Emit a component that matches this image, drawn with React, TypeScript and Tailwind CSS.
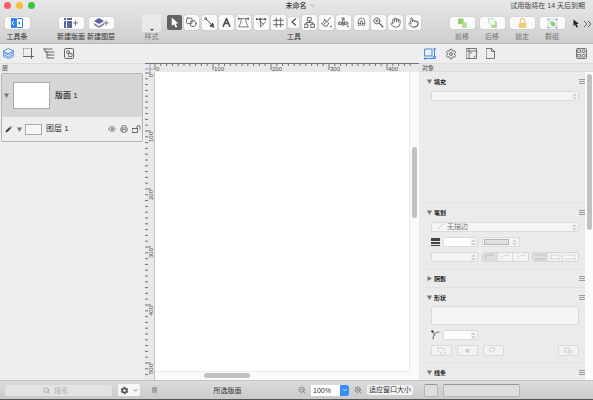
import type { ReactNode } from "react";
import { ChevronDown, Search, ZoomIn, ZoomOut, Settings, Magnet, Hand, Pointer, Printer, Eye, ChevronsUpDown } from "lucide-react";
import { IoMdSettings } from "react-icons/io";

const stroke = {
  fill: "none",
  stroke: "currentColor",
  strokeLinecap: "round" as const,
  strokeLinejoin: "round" as const,
};

const tools: { label: string; icon: ReactNode }[] = [
  {
    label: "选择",
    icon: <path d="M5 1v15l4-3 3 6 3-1-3-6h5z" fill="white" />,
  },
  {
    label: "形状",
    icon: (
      <g {...stroke} strokeWidth="1.5">
        <rect x="1" y="2" width="10" height="10" rx="2" />
        <circle cx="13" cy="12" r="5.5" />
      </g>
    ),
  },
  {
    label: "线条",
    icon: (
      <g {...stroke} strokeWidth="1.7">
        <circle cx="3" cy="3" r="1.7" />
        <path d="M4 4l10 10" />
        <path d="M11 16l5-5 2 7z" fill="currentColor" />
      </g>
    ),
  },
  {
    label: "文本",
    icon: <path d="M10 3L4 17M10 3l6 14M6.500 12h7" {...stroke} strokeWidth="2.8" />,
  },
  {
    label: "钢笔",
    icon: (
      <g {...stroke} strokeWidth="1.3">
        <path d="M1 3h18M6 3C6 9 4 14 1 18h18c-3-4-5-9-5-15" />
        <path d="M0 2h2v2H0zM18 2h2v2h-2z" fill="currentColor" />
      </g>
    ),
  },
  {
    label: "图表",
    icon: (
      <g {...stroke} strokeWidth="1.5">
        <path d="M1 4h16M8 4v14l9-9" />
        <path d="M0 3h2v2H0zM16 3h2v2h-2zM7 3h2v2H7z" fill="currentColor" />
        <path d="M8 8l5 5" />
      </g>
    ),
  },
  {
    label: "画板",
    icon: <path d="M6 2v16M14 2v16M1 6h18M1 14h18" {...stroke} strokeWidth="1.5" />,
  },
  {
    label: "收起",
    icon: <path d="M14 2L5 10l9 8" {...stroke} strokeWidth="3" />,
  },
  {
    label: "组织图",
    icon: (
      <g {...stroke} strokeWidth="1.5">
        <path d="M7 1h6v6H7zM1 13h6v6H1zM13 13h6v6h-6zM10 7v3M4 13v-3h12v3" />
      </g>
    ),
  },
  {
    label: "样式刷",
    icon: (
      <g {...stroke} strokeWidth="1.5">
        <path d="M17 1l-5 6M7 5l7 6-3 6c-4 0-8-2-10-6 3 0 4-3 6-6zM9 8l-3 5" />
        <path d="M18 17h1v1h-1z" fill="currentColor" />
      </g>
    ),
  },
  {
    label: "印章",
    icon: (
      <g {...stroke} strokeWidth="1.3">
        <circle cx="9" cy="3" r="2" />
        <path d="M8 5v10h3V5M1 10q3-3 6 0v4H1zM12 10q3-3 6 0v4h-6zM1 11h17" />
        <path d="M18 17h1v1h-1z" fill="currentColor" />
      </g>
    ),
  },
  { label: "磁铁", icon: <Magnet size={18} x={1} y={1} strokeWidth={1.6} transform="rotate(-45 10 10)" /> },
  {
    label: "缩放",
    icon: (
      <g {...stroke} strokeWidth="1.5">
        <circle cx="7" cy="7" r="5.500" />
        <path d="M5 7h4M7 5v4" />
        <path d="M12 12l6 6" strokeWidth="2.4" />
      </g>
    ),
  },
  { label: "平移", icon: <Hand size={20} strokeWidth={1.7} /> },
  { label: "浏览", icon: <Pointer size={20} strokeWidth={1.7} /> },
];

const arrange = [
  {
    label: "前移",
    icon: (
      <>
        <path d="M2 1h10v10H2z" fill="#8fce6d" />
        <path d="M9 8h9v10H9z" fill="#b5dfa0" />
      </>
    ),
  },
  {
    label: "后移",
    icon: (
      <>
        <path d="M8 7h10v11H8z" fill="#a8d98f" />
        <path d="M3 1h8l4 4v8H8l-5-4z" fill="#eef7e9" stroke="#9bd27d" />
      </>
    ),
  },
  {
    label: "锁定",
    icon: (
      <>
        <path d="M6 9V5a4 4 0 018 0v4" fill="none" stroke="#e9c477" strokeWidth="2" />
        <path d="M3 9h14v9H3z" fill="#f0cb7c" />
      </>
    ),
  },
  {
    label: "群组",
    icon: (
      <>
        <path d="M2 2h16v16H2z" fill="none" stroke="#a9bdd8" />
        <path d="M1 1h3v3H1zM16 1h3v3h-3zM1 16h3v3H1zM16 16h3v3h-3z" fill="#8aa5cc" />
        <path d="M5 5h7v7H5z" fill="#b7dda5" />
        <path d="M8 8h7v7H8z" fill="#8fce6d" />
      </>
    ),
  },
];

function LabelledButton({ label, children, dim }: { label: string; children: ReactNode; dim?: boolean }) {
  return (
    <label className={`flex w-[30px] flex-col items-center gap-[3px] whitespace-nowrap ${dim ? "text-[#777]" : "text-[#333]"}`}>
      <button className="flex h-[12px] w-[25px] items-center justify-center rounded-[2px] bg-[#fbfbfb] shadow-[0_0_1px_#999]">
        {children}
      </button>
      {label}
    </label>
  );
}

function Ruler({ vertical }: { vertical?: boolean }) {
  const marks = Array.from({ length: vertical ? 54 : 45 }, (_, i) => i);
  return (
    <svg width="100%" height="100%" className="block text-[#555]" aria-hidden="true">
      {marks.map((i) => {
        const at = 1 + i * 5.8;
        const long = i % 10 === 0;
        return vertical ? (
          <g key={i}>
            <path d={long ? `M0 ${at}h6` : `M0 ${at}h3`} stroke="currentColor" strokeWidth="0.8" />
            {long && (
              <text fontSize="6" fill="currentColor" textAnchor="end" transform={`translate(8 ${at + 1}) rotate(-90)`}>
                {i * 10}
              </text>
            )}
          </g>
        ) : (
          <g key={i}>
            <path d={long ? `M${at} 0v6` : `M${at} 0v2`} stroke="currentColor" strokeWidth="0.8" />
            {long && (
              <text fontSize="6" fill="currentColor" x={at + 1} y="7">
                {i * 10}
              </text>
            )}
          </g>
        );
      })}
    </svg>
  );
}

function Triangle({ closed }: { closed?: boolean }) {
  return (
    <svg width="5" height="5" viewBox="0 0 10 10" className="shrink-0 text-[#777]">
      <path d={closed ? "M1 0l9 5-9 5z" : "M0 1h10L5 10z"} fill="currentColor" />
    </svg>
  );
}

function SectionTitle({ title, closed }: { title: string; closed?: boolean }) {
  return (
    <div className="flex h-[9px] items-center justify-between pl-2">
      <h2 className="flex items-center gap-[2px] text-[6px] font-bold text-[#222]">
        <Triangle closed={closed} />
        {title}
      </h2>
      <button aria-label={`${title}菜单`}>
        <svg width="6" height="5" viewBox="0 0 6 5" className="block">
          <path d="M0 .5h6M0 2.500h6M0 4.500h6" stroke="#999" />
        </svg>
      </button>
    </div>
  );
}

function Stepper({ label, white }: { label: string; white?: boolean }) {
  return (
    <div className="flex h-[10px] w-full items-center rounded-[2px] border border-[#dadada] bg-[#f5f5f5]">
      <input aria-label={label} className={`h-full min-w-0 flex-1 ${white ? "bg-white" : "bg-transparent"}`} />
      <ChevronsUpDown size={7} className="shrink-0 text-[#777]" />
    </div>
  );
}

function Segments({ icons }: { icons: string[] }) {
  return (
    <div className="flex h-[10px] divide-x divide-[#dcdcdc] overflow-hidden rounded-[2px] border border-[#d6d6d6] bg-[#f3f3f3]">
      {icons.map((d, i) => (
        <button key={i} aria-label={`选项 ${i + 1}`} className={`flex w-[15px] items-center justify-center ${i === 0 ? "bg-[#dedede]" : ""}`}>
          <svg width="11" height="6" viewBox="0 0 11 6">
            <path d={d} {...stroke} stroke={i === 0 ? "#b8b8b8" : "#cfcfcf"} strokeWidth="0.8" />
          </svg>
        </button>
      ))}
    </div>
  );
}

function Header() {
  return (
    <header className="border-b border-[#b5b5b5] bg-gradient-to-b from-[#e8e8e8] to-[#cecece]">
      <div className="grid h-[11px] grid-cols-3 items-center px-1">
        <div className="flex gap-[5px]">
          <button aria-label="关闭" className="size-[7px] rounded-full bg-[#f65f58]" />
          <button aria-label="最小化" className="size-[7px] rounded-full bg-[#f9bd35]" />
          <button aria-label="全屏" className="size-[7px] rounded-full bg-[#35c943]" />
        </div>
        <h1 className="flex items-center justify-center gap-[2px] pl-2 text-[7px] font-medium text-[#333]">
          未命名
          <ChevronDown size={7} className="text-[#888]" />
        </h1>
        <p className="pr-1 text-right text-[7px] text-[#444]">试用版将在 14 天后到期</p>
      </div>

      <div className="flex h-8 items-start pt-[6px] pr-[2px] pl-[2px] text-[7px] leading-[10px]">
        <LabelledButton label="工具条">
          <svg width="12" height="10" viewBox="0 0 12 10">
            <path d="M0 0h5v10H0z" fill="#3285ea" />
            <path d="M3 3L1 5l2 2" fill="none" stroke="white" />
            <path d="M5.5.5h6v9h-6z" fill="none" stroke="#3285ea" />
            <path d="M7 5l2-2v4z" fill="#3285ea" />
          </svg>
        </LabelledButton>
        <div className="ml-6 flex">
          <LabelledButton label="新建版面">
            <svg width="15" height="10" viewBox="0 0 15 10">
              <path d="M0 0h2v2H0zM3 0h5v2H3zM0 3h2v7H0zM3 3h5v7H3z" fill="#59669d" />
              <path d="M9 5h5M11.500 2.500v5" stroke="#777" />
            </svg>
          </LabelledButton>
          <LabelledButton label="新建图层">
            <svg width="15" height="10" viewBox="0 0 15 10">
              <path d="M0 3l5-3 5 3-5 3z" fill="#59669d" />
              <path d="M0 5l5 3 5-3v2L5 10 0 7z" fill="#7984b0" />
              <path d="M9.500 5h5M12 2.500v5" stroke="#777" />
            </svg>
          </LabelledButton>
        </div>
        <label className="-mt-[3px] ml-[26px] flex flex-col items-center text-[#777]">
          <button className="flex h-[18px] w-[19px] items-end justify-center rounded-[2px] bg-[#e9e9e9] pb-[1px]">
            <svg width="4" height="2" viewBox="0 0 4 2">
              <path d="M0 0h4L2 2z" fill="#444" />
            </svg>
          </button>
          样式
        </label>
        <div className="ml-[6px] w-[254px] text-center text-[#333]">
          <div className="-mt-[3px] mb-[2px] flex h-4 items-center justify-between">
            {tools.map((tool, i) => (
              <button
                key={tool.label}
                aria-label={tool.label}
                className={`flex items-center justify-center rounded-[2px] ${i === 7 ? "h-[11px] w-[11px]" : "h-[15px] w-[15px]"} ${i === 0 ? "bg-[#626262]" : "bg-[#fafafa] text-[#505050] shadow-[0_0_1px_#999]"}`}
              >
                <svg width={i === 7 ? 8 : 11} height={i === 7 ? 8 : 11} viewBox="0 0 20 20" className="shrink-0">
                  {tool.icon}
                </svg>
              </button>
            ))}
          </div>
          工具
        </div>
        <div className="ml-auto flex">
          {arrange.map((item) => (
            <LabelledButton key={item.label} label={item.label} dim>
              <svg width="11" height="11" viewBox="0 0 20 20">
                {item.icon}
              </svg>
            </LabelledButton>
          ))}
        </div>
        <div className="ml-[6px] flex h-[13px] items-center gap-1">
          <svg width="6" height="9" viewBox="0 0 12 18">
            <path d="M1 1v13l3-3 3 6 3-1-3-6h5z" fill="#222" />
          </svg>
          <button aria-label="更多">
            <svg width="8" height="6" viewBox="0 0 8 6">
              <path d="M1 0l3 3-3 3M5 0l3 3-3 3" fill="none" stroke="#555" strokeWidth="0.9" />
            </svg>
          </button>
        </div>
      </div>
    </header>
  );
}

function Sidebar() {
  return (
    <aside className="flex w-[145px] shrink-0 flex-col bg-[#eeeeee]">
      <nav className="flex h-[19px] items-center gap-[9px] pl-[3px] text-[#666]">
        <button aria-label="层" className="text-[#3f8ae8]">
          <svg width="11" height="11" viewBox="0 0 22 22">
            <path d="M1 6l10-5 10 5-10 5zM1 6v3l10 5 10-5V6M1 11v2l10 5 10-5v-2M1 15v2l10 4 10-4v-2" {...stroke} strokeWidth="1.7" />
          </svg>
        </button>
        <button aria-label="参考线">
          <svg width="11" height="11" viewBox="0 0 11 11">
            <path d="M.5.5v8M.5.5h8" {...stroke} strokeWidth="0.6" strokeDasharray="0.5 1.500" />
            <path d="M8.500 0v11M0 8.500h11" {...stroke} strokeWidth="1" />
          </svg>
        </button>
        <button aria-label="大纲">
          <svg width="12" height="11" viewBox="0 0 12 11">
            <path d="M0 1h9M4 4h7M6 7h5M6 10h5M2 1v3h2M4 4v6h2M4 7h2" {...stroke} strokeWidth="1" />
          </svg>
        </button>
        <button aria-label="选择">
          <svg width="11" height="11" viewBox="0 0 11 11">
            <rect x=".5" y=".5" width="9" height="10" rx="1" {...stroke} />
            <circle cx="4" cy="4" r="1.500" {...stroke} strokeWidth="0.9" />
            <path d="M5 5.500h3v3H5z" {...stroke} strokeWidth="0.9" />
          </svg>
        </button>
      </nav>
      <div className="flex h-[9px] items-center border-t border-[#dcdcdc] bg-[#e9e9e9] pl-[2px] text-[6px] text-[#444]">层</div>
      <div className="mt-[1px] mr-[2px] ml-[1px] rounded-[2px] border border-[#b5b5b5] text-[8px] text-[#333]">
        <div className="flex h-[43px] items-center gap-1 bg-[#d6d6d6] pl-[2px]">
          <Triangle />
          <div className="h-[27px] w-[37px] border border-[#aaa] bg-white" />
          <span className="pl-[1px] font-medium">版面 1</span>
        </div>
        <div className="flex h-[24px] items-center gap-[3px] pr-[1px] pl-[3px]">
          <svg width="7" height="7" viewBox="0 0 14 14" className="mr-[2px]">
            <path d="M1 13l1-4 7-7 3 3-7 7z" fill="#444" />
            <path d="M10 1l1-1 3 3-1 1z" fill="#444" />
          </svg>
          <Triangle />
          <div className="h-[11px] w-[17px] border border-[#aaa] bg-[#f7f7f7]" />
          <span className="flex-1 pl-[1px]">图层 1</span>
          <div className="flex items-center gap-1 text-[#555]">
            <button aria-label="可见"><Eye size={8} /></button>
            <button aria-label="打印"><Printer size={8} /></button>
            <button aria-label="锁定">
              <svg width="9" height="8" viewBox="0 0 9 8">
                <path d="M.5 3.500h5v4h-5zM5 3.500V2a1.500 1.500 0 013 0v2" {...stroke} strokeWidth="0.9" />
              </svg>
            </button>
          </div>
        </div>
      </div>
    </aside>
  );
}

function Canvas() {
  return (
    <main className="flex min-w-0 flex-1 flex-col">
      <div className="h-[19px] bg-[#eeeeee]" />
      <div className="flex h-[9px] border-t border-[#777] bg-[#e9e9e9]">
        <div className="w-[9px] shrink-0">
          <svg width="9" height="8" viewBox="0 0 9 8">
            <path d="M0 5h9M5 0v8" stroke="#8e8ecb" strokeWidth="0.8" />
          </svg>
        </div>
        <div className="min-w-0 flex-1 overflow-hidden"><Ruler /></div>
      </div>
      <div className="flex min-h-0 flex-1">
        <div className="w-[10px] shrink-0 border-r border-[#c4c4c4] bg-[#e9e9e9]"><Ruler vertical /></div>
        <div className="flex min-w-0 flex-1 flex-col bg-[#fafafa]">
          <div className="flex min-h-0 flex-1">
            <div className="flex-1 border-r border-b border-[#ececec] bg-white" />
            <div className="w-[9px] px-[2px] pt-[75px]">
              <div className="h-[71px] rounded-full bg-[#c1c1c1]" />
            </div>
          </div>
          <div className="h-2 pt-[1px] pl-[49px]">
            <div className="h-[5px] w-[46px] rounded-full bg-[#c1c1c1]" />
          </div>
        </div>
      </div>
    </main>
  );
}

function Inspector() {
  return (
    <aside className="flex w-[174px] shrink-0 flex-col bg-[#ebebeb]">
      <nav className="flex h-[19px] items-center gap-[9px] bg-[#eeeeee] pr-[6px] pl-[5px] text-[#666]">
        <button aria-label="对象" className="text-[#3f8ae8]">
          <svg width="12" height="12" viewBox="0 0 12 12">
            <path d="M1 1h7v7H1zM10.500 0v9M9.500 1h2M0 10.500h10M1 9.500v2M9.500 8.500h2v2h-2z" {...stroke} />
          </svg>
        </button>
        <button aria-label="属性"><Settings size={12} /></button>
        <button aria-label="画布">
          <svg width="11" height="11" viewBox="0 0 11 11">
            <path d="M.5.500h10v10H.500zM.500 3h10M3 .500v10" {...stroke} strokeWidth="0.9" />
            <path d="M4.500 5.500v-1h1M8 9h1V8" {...stroke} strokeWidth="0.7" />
          </svg>
        </button>
        <button aria-label="文稿">
          <svg width="9" height="11" viewBox="0 0 9 11">
            <path d="M.5.500h5l3 3v7h-8zM5.500.500v3h3" {...stroke} strokeWidth="0.9" />
          </svg>
        </button>
        <button aria-label="模具" className="ml-auto">
          <svg width="11" height="11" viewBox="0 0 11 11">
            <rect x=".5" y=".5" width="10" height="10" rx="1" {...stroke} strokeWidth="0.9" />
            <path d="M2 2h2.500v2.500H2zM6.500 2H9v2.500H6.500zM2 6.500h2.500V9H2zM6.500 6.500H9V9H6.500z" {...stroke} strokeWidth="0.8" />
          </svg>
        </button>
      </nav>
      <div className="flex h-[9px] items-center border-y border-[#dcdcdc] bg-[#e6e6e6] pl-[3px] text-[6px] text-[#444]">对象</div>
      <div className="flex min-h-0 flex-1">
        <div className="flex min-w-0 flex-1 flex-col overflow-hidden">
          <section className="h-[131px] shrink-0 border-b border-[#e3e3e3] pt-[5px]">
            <SectionTitle title="填充" />
            <div className="mt-[5px] mr-[6px] ml-3 flex h-[10px] items-center rounded-[2px] border border-[#dadada] bg-[#f5f5f5]">
              <select aria-label="填充类型" className="min-w-0 flex-1 appearance-none" />
              <ChevronsUpDown size={7} className="text-[#777]" />
            </div>
          </section>
          <section className="h-[67px] shrink-0 border-b border-[#e3e3e3] pt-[5px]">
            <SectionTitle title="笔划" />
            <div className="mt-[5px] mr-[6px] ml-3 flex flex-col gap-[5px]">
              <div className="flex h-[10px] items-center rounded-[2px] border border-[#dadada] bg-[#f5f5f5] pl-1">
                <svg width="8" height="8" viewBox="0 0 8 8">
                  <path d="M1 7l6-6" stroke="#ccc" />
                </svg>
                <select aria-label="描边类型" className="min-w-0 flex-1 appearance-none pl-[3px] text-[7px] leading-[8px] text-[#777]">
                  <option>无描边</option>
                </select>
                <ChevronsUpDown size={7} className="text-[#777]" />
              </div>
              <div className="flex items-center gap-[3px]">
                <svg width="9" height="9" viewBox="0 0 9 9">
                  <path d="M0 0h9v3H0zM0 4h9v2H0zM0 7h9v1H0z" fill="#444" />
                </svg>
                <div className="w-[35px]"><Stepper label="线宽" white /></div>
                <button aria-label="描边颜色" className="ml-[1px] flex h-[10px] w-[38px] items-center rounded-[2px] border border-[#dadada] bg-[#f5f5f5] pl-[1px]">
                  <span className="mr-[2px] h-[6px] w-[25px] border border-[#b5b5b5] bg-[#dfdfdf]" />
                  <ChevronsUpDown size={7} className="text-[#777]" />
                </button>
              </div>
              <div className="flex justify-between">
                <div className="w-[47px]"><Stepper label="线型" /></div>
                <Segments icons={["M2 5V1h8", "M2 5q1-4 8-4", "M2 5q3-4 8-4"]} />
                <Segments icons={["M0 1h11M0 5h11", "M1 1h9v4H1z", "M0 1h11v4H0z"]} />
              </div>
            </div>
          </section>
          <section className="h-[18px] shrink-0 border-b border-[#e3e3e3] pt-1">
            <SectionTitle title="阴影" closed />
          </section>
          <section className="h-[75px] shrink-0 border-b border-[#e3e3e3] pt-[5px]">
            <SectionTitle title="形状" />
            <div className="mt-1 mr-[6px] ml-3 flex flex-col gap-[5px]">
              <button aria-label="选择形状" className="h-[19px] rounded-[2px] border border-[#dadada] bg-[#f5f5f5]" />
              <div className="flex gap-[3px]">
                <svg width="9" height="10" viewBox="0 0 9 10">
                  <path d="M1 1l3 4M2 9c0-4 2-7 6-7" {...stroke} stroke="#555" strokeWidth="0.9" />
                  <circle cx="1.500" cy="1.500" r="1.200" fill="#444" />
                </svg>
                <div className="w-[35px]"><Stepper label="圆角" white /></div>
              </div>
              <div className="flex gap-[5px]">
                {["联合", "相交", "减去", "断开"].map((name, i) => (
                  <button
                    key={name}
                    aria-label={name}
                    className="flex h-[11px] w-[21px] items-center justify-center rounded-[2px] border border-[#dadada] bg-[#f2f2f2] last:ml-auto"
                  >
                    <svg width="9" height="8" viewBox="0 0 9 8">
                      {i === 0 && <path d="M1 1h4l1 1a2 2 0 012 4 2 2 0 01-4 0L1 4z" {...stroke} stroke="#ccc" strokeWidth="0.8" />}
                      {i === 1 && <path d="M3 2h3v3a2 2 0 01-3-3z" fill="#ccc" />}
                      {i === 2 && <path d="M1 1h5v2L3 5H1z" {...stroke} stroke="#ccc" strokeWidth="0.8" />}
                      {i === 3 && (
                        <g {...stroke} stroke="#ccc" strokeWidth="0.8">
                          <path d="M1 1h4v4H1z" />
                          <circle cx="6" cy="5" r="2" />
                        </g>
                      )}
                    </svg>
                  </button>
                ))}
              </div>
            </div>
          </section>
          <section className="pt-[5px]">
            <SectionTitle title="线条" />
          </section>
        </div>
        <div className="w-2 shrink-0 bg-[#fbfbfb] pt-[2px] pr-[1px] pl-[2px]">
          <div className="h-[156px] rounded-full bg-[#c1c1c1]" />
        </div>
      </div>
    </aside>
  );
}

function StatusBar() {
  return (
    <footer className="flex h-5 shrink-0 items-center border-t border-b border-t-[#c4c4c4] border-b-[#555] bg-gradient-to-b from-[#dcdcdc] to-[#cacaca] text-[7px] text-[#333]">
      <div className="flex w-[145px] shrink-0 items-center gap-[6px] pr-[5px] pl-[5px]">
        <label className="flex h-[11px] flex-1 items-center justify-center gap-1 rounded-[2px] bg-[#e3e3e3] text-[#888]">
          <Search size={7} />
          <input aria-label="搜索" placeholder="搜索" className="w-5 placeholder:text-[#b5b5b5]" />
        </label>
        <button aria-label="操作" className="flex h-[12px] w-[22px] items-center justify-center gap-1 rounded-[2px] bg-[#f6f6f6] text-[#555]">
          <IoMdSettings size={9} />
          <ChevronDown size={5} strokeWidth={4} />
        </button>
      </div>
      <div className="flex min-w-0 flex-1 items-center pr-[6px] pl-[7px]">
        <svg width="5" height="6" viewBox="0 0 5 6">
          <path d="M0 0h5v6H0z" fill="#aaa" />
          <path d="M0 1.500h5M0 3.500h5" stroke="#888" strokeWidth="0.5" />
        </svg>
        <span className="flex-1 text-center">所选版面</span>
        <button aria-label="缩小" className="mr-[5px] text-[#666]"><ZoomOut size={8} /></button>
        <div className="flex h-[11px] bg-white">
          <input aria-label="缩放比例" defaultValue="100%" className="w-[29px] pl-[2px]" />
          <button aria-label="缩放列表" className="flex w-[9px] items-center justify-center rounded-r-[2px] bg-[#3b8cf4] text-white">
            <ChevronDown size={6} strokeWidth={3} />
          </button>
        </div>
        <button aria-label="放大" className="mx-[5px] text-[#666]"><ZoomIn size={8} /></button>
        <button className="h-[10px] rounded-[2px] bg-[#f3f3f3] px-[2px] leading-[10px]">适应窗口大小</button>
      </div>
      <div className="flex w-[174px] shrink-0 gap-[5px] pl-[5px]">
        <div className="h-[13px] w-[14px] rounded-[2px] border border-[#b5b5b5] border-t-[#999] bg-[#dedede]" />
        <div className="h-[13px] w-[77px] rounded-[2px] border border-[#b5b5b5] border-t-[#999] bg-[#dedede]" />
      </div>
    </footer>
  );
}

export default function App() {
  return (
    <div className="flex h-screen flex-col overflow-hidden bg-[#eeeeee] font-['Liberation_Sans','Noto_Sans_CJK_SC',sans-serif] leading-none">
      <Header />
      <div className="flex min-h-0 flex-1">
        <Sidebar />
        <Canvas />
        <Inspector />
      </div>
      <StatusBar />
    </div>
  );
}
